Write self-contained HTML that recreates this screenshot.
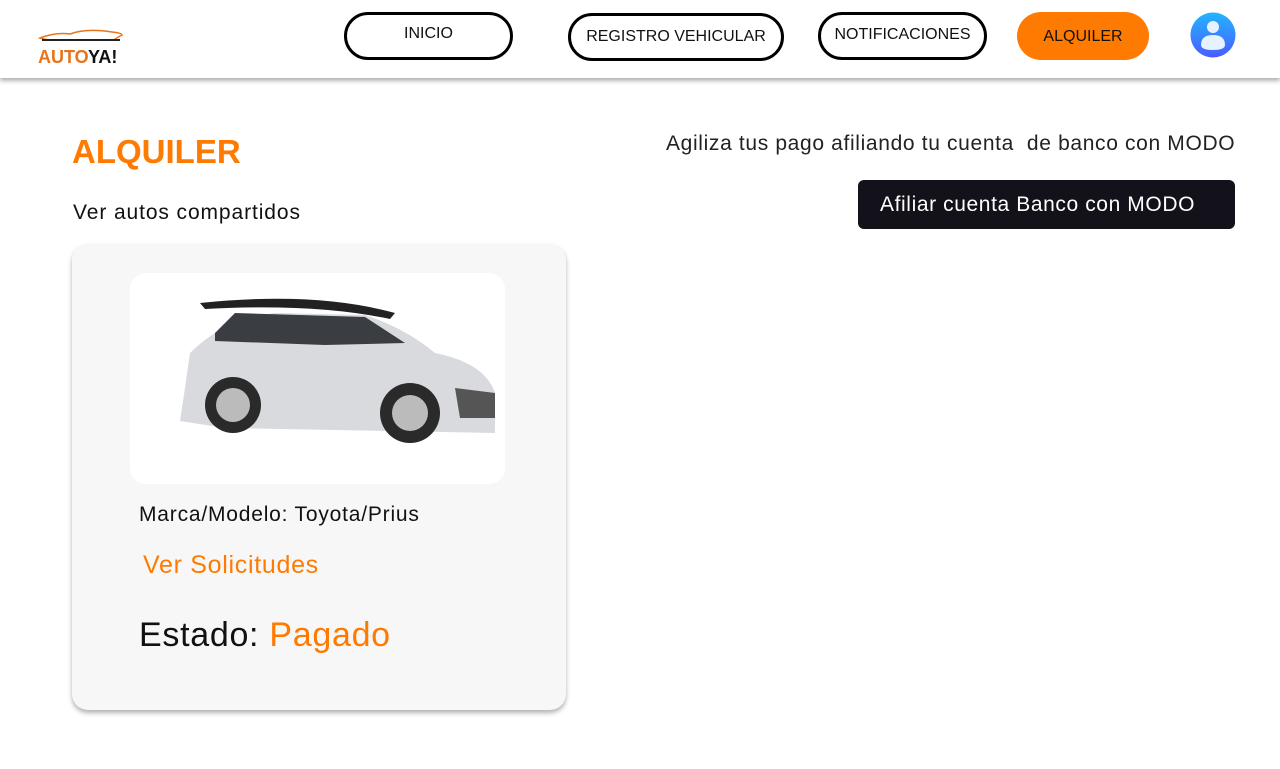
<!DOCTYPE html>
<html><head><meta charset="utf-8"><style>
*{box-sizing:border-box;margin:0;padding:0}
body{width:1280px;height:769px;background:#fff;font-family:"Liberation Sans",sans-serif;position:relative;overflow:hidden;color:#111}
.hdr{position:absolute;left:0;top:0;width:1280px;height:78px;background:#fff;box-shadow:0 3px 4px rgba(0,0,0,.3)}
.nav{position:absolute;height:48px;border:3px solid #000;border-radius:24px;font-size:16px;display:flex;align-items:center;justify-content:center;color:#111}
.abs{position:absolute}
</style></head><body>
<div class="hdr">
<svg class="abs" style="left:36px;top:26px" width="90" height="40" viewBox="0 0 90 40">
<path d="M4 12 Q20 6 34 8 Q50 2 76 6 Q86 7 86 9 Q80 12 78 14 L12 14 Z" fill="none" stroke="#e8741c" stroke-width="1.5"/>
<path d="M6 14 L84 14" stroke="#222" stroke-width="2"/>
<text x="2" y="37" font-family="Liberation Sans" font-weight="bold" font-size="18" fill="#e8741c">AUTO</text>
<text x="52" y="37" font-family="Liberation Sans" font-weight="bold" font-size="18" fill="#111">YA!</text>
</svg>
<div class="nav" style="left:344px;top:12px;width:169px;padding-bottom:4px">INICIO</div>
<div class="nav" style="left:568px;top:13px;width:216px">REGISTRO VEHICULAR</div>
<div class="nav" style="left:818px;top:12px;width:169px;padding-bottom:2px">NOTIFICACIONES</div>
<div class="nav" style="left:1017px;top:12px;width:132px;border:none;background:#ff7a00;padding-top:2px">ALQUILER</div>
<svg class="abs" style="left:1190px;top:12px" width="46" height="46" viewBox="0 0 46 46">
<defs><linearGradient id="g" x1="0" y1="0" x2="0" y2="1"><stop offset="0" stop-color="#22b5ff"/><stop offset="1" stop-color="#4a5cff"/></linearGradient></defs>
<circle cx="23" cy="23" r="22.5" fill="url(#g)"/>
<circle cx="23" cy="15" r="6" fill="#e6f2ff"/>
<path d="M11 33 Q11 23 23 23 Q35 23 35 33 Q35 38 23 38 Q11 38 11 33Z" fill="#e6f2ff"/>
</svg>
</div>
<div class="abs" style="left:72px;top:133px;font-size:33px;font-weight:bold;color:#ff7a00">ALQUILER</div>
<div class="abs" style="left:73px;top:201px;font-size:21px;letter-spacing:0.9px">Ver autos compartidos</div>
<div class="abs" style="left:666px;top:132px;font-size:21px;color:#222;letter-spacing:0.65px">Agiliza tus pago afiliando tu cuenta&nbsp; de banco con MODO</div>
<div class="abs" style="left:858px;top:180px;width:377px;height:49px;background:#13121a;border-radius:6px;color:#fff;font-size:21px;padding:13px 0 0 22px;letter-spacing:0.6px">Afiliar cuenta Banco con MODO</div>
<div class="abs" style="left:72px;top:244px;width:494px;height:466px;background:#f7f7f7;border-radius:16px;box-shadow:0 3px 5px rgba(0,0,0,.3)">
<div class="abs" style="left:58px;top:29px;width:375px;height:211px;background:#fff;border-radius:16px">
<svg class="abs" style="left:35px;top:20px" width="335" height="160" viewBox="0 0 335 160">
<path d="M20 95 L25 60 Q60 25 110 20 L200 22 Q240 35 270 60 Q320 70 330 100 L330 140 L60 135 L15 128 Z" fill="#d8dadd"/>
<path d="M35 10 Q150 -2 230 20 L225 26 Q150 10 40 16Z" fill="#222"/>
<path d="M50 40 L70 20 L200 24 L240 50 L160 52 L50 48Z" fill="#3a3d42"/>
<circle cx="68" cy="112" r="28" fill="#2a2a2a"/><circle cx="68" cy="112" r="17" fill="#bbb"/>
<circle cx="245" cy="120" r="30" fill="#2a2a2a"/><circle cx="245" cy="120" r="18" fill="#bbb"/>
<path d="M290 95 L330 100 L330 125 L295 125Z" fill="#555"/>
</svg>
</div>
<div class="abs" style="left:67px;top:259px;font-size:21px;letter-spacing:0.8px">Marca/Modelo: Toyota/Prius</div>
<div class="abs" style="left:71px;top:307px;font-size:25px;color:#ff7a00;letter-spacing:0.7px">Ver Solicitudes</div>
<div class="abs" style="left:67px;top:372px;font-size:34px;letter-spacing:0.7px">Estado: <span style="color:#ff7a00">Pagado</span></div>
</div>
</body></html>
